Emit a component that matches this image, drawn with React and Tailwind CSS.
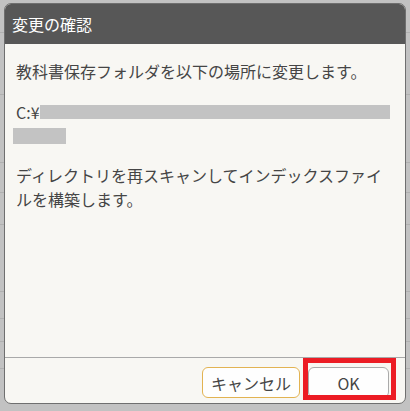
export default function App() {
  const font = { fontFamily: '"Noto Sans CJK JP", "Noto Sans", sans-serif' };
  const rows = [33, 62, 68, 30, 32, 67, 27, 23, 27];
  return (
    <div className="relative w-[410px] h-[411px] overflow-hidden bg-[#c2c2c2]" style={font}>
      <div className="flex flex-col">
        {rows.map((h, i) => (
          <div key={i} className="border-b border-[#b0b0b0]" style={{ height: h }} />
        ))}
      </div>
      <div className="absolute left-[4px] top-[3px] w-[402px] h-[401px] flex flex-col rounded-[7px] border border-[#6f6f6f] bg-[#f8f7f3] overflow-hidden">
        <div className="h-[40px] bg-[#575757] flex items-center pl-[7px] text-white text-[16px] leading-[24px] shrink-0">
          変更の確認
        </div>
        <div className="flex-1 px-[11px] pt-[15px] text-[16px] leading-[24px] text-[#454545]">
          <p>教科書保存フォルダを以下の場所に変更します。</p>
          <div className="mt-[17px]">
            <div className="flex items-center pr-[4px]">
              <span className="shrink-0">C:¥</span>
              <span className="inline-block flex-1 h-[14px] bg-[#c3c3c3]" />
            </div>
            <div className="h-[24px] flex items-center -ml-[3px]">
              <span className="inline-block w-[53px] h-[16px] bg-[#c3c3c3]" />
            </div>
          </div>
          <p className="mt-[15px] pr-[10px]">ディレクトリを再スキャンしてインデックスファイルを構築します。</p>
        </div>
        <div className="h-[46px] shrink-0 border-t border-[#a9a9a9] flex items-center justify-end gap-[8px] pr-[16px] pt-[4px]">
          <button className="w-[98px] h-[31px] rounded-[6px] border border-[#e2b352] bg-[#fefefe] text-[16px] text-[#454545] leading-none">
            キャンセル
          </button>
          <button className="w-[81px] h-[31px] rounded-[6px] border border-[#aaaaaa] bg-[#fefefe] text-[16px] text-[#454545] leading-none">
            OK
          </button>
        </div>
      </div>
      <div className="absolute left-[303px] top-[358px] w-[93px] h-[42px] border-[5px] border-[#ec1c24]" />
    </div>
  );
}
